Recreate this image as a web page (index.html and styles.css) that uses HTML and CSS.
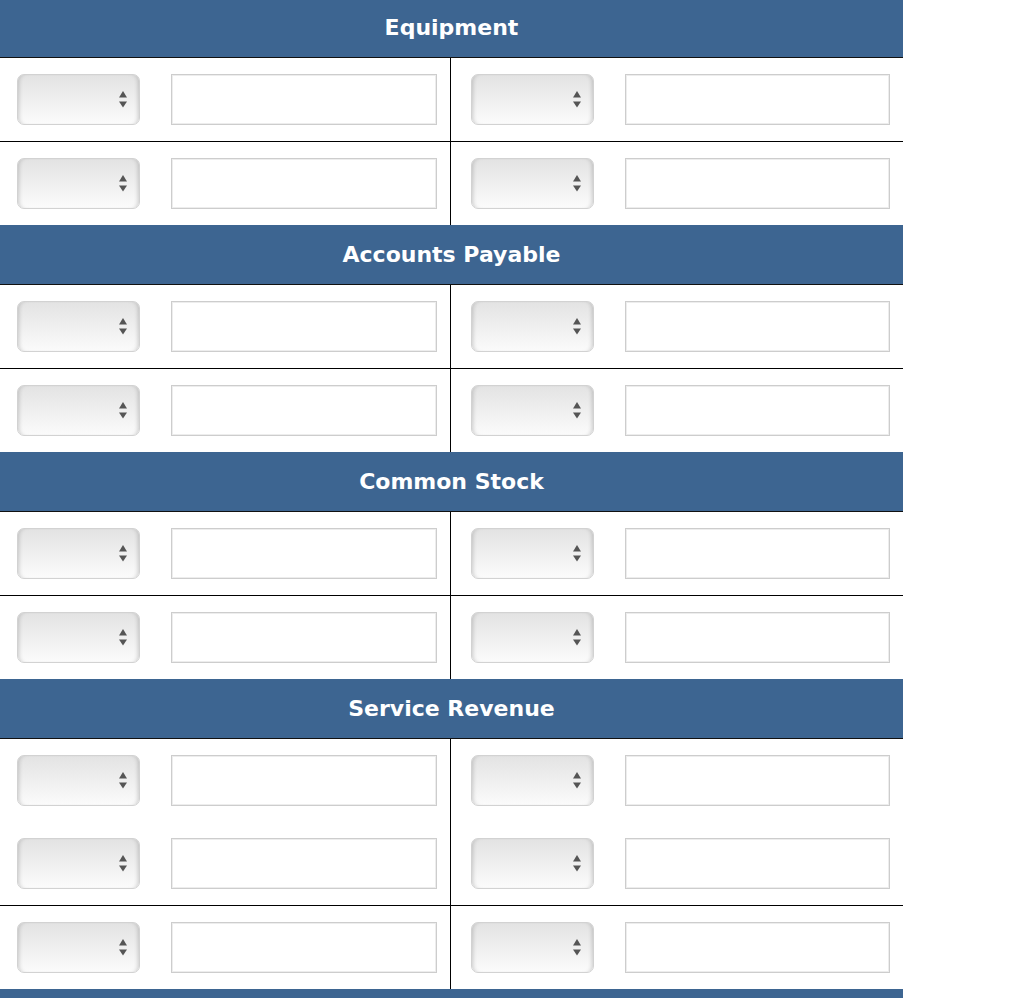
FILE: index.html
```html
<!DOCTYPE html>
<html lang="en">

<head>
    <meta charset="UTF-8">
    <meta name="viewport" content="width=device-width, initial-scale=1.0">
    <title>journal</title>
    <link rel="stylesheet" href="styles.css">
</head>

<body>

    <div class="sheet">

        <!-- Equipment -->
        <h2 class="account">Equipment</h2>
        <div class="row ruled">
            <div class="cell"><div class="pick"><svg viewBox="0 0 8 17" width="8" height="17"><polygon points="4,0 8,6.5 0,6.5"/><polygon points="0,10.5 8,10.5 4,16.5"/></svg></div><input class="amount" type="text"></div>
            <div class="cell right"><div class="pick"><svg viewBox="0 0 8 17" width="8" height="17"><polygon points="4,0 8,6.5 0,6.5"/><polygon points="0,10.5 8,10.5 4,16.5"/></svg></div><input class="amount" type="text"></div>
        </div>
        <div class="row">
            <div class="cell"><div class="pick"><svg viewBox="0 0 8 17" width="8" height="17"><polygon points="4,0 8,6.5 0,6.5"/><polygon points="0,10.5 8,10.5 4,16.5"/></svg></div><input class="amount" type="text"></div>
            <div class="cell right"><div class="pick"><svg viewBox="0 0 8 17" width="8" height="17"><polygon points="4,0 8,6.5 0,6.5"/><polygon points="0,10.5 8,10.5 4,16.5"/></svg></div><input class="amount" type="text"></div>
        </div>

        <!-- Accounts Payable -->
        <h2 class="account">Accounts Payable</h2>
        <div class="row ruled">
            <div class="cell"><div class="pick"><svg viewBox="0 0 8 17" width="8" height="17"><polygon points="4,0 8,6.5 0,6.5"/><polygon points="0,10.5 8,10.5 4,16.5"/></svg></div><input class="amount" type="text"></div>
            <div class="cell right"><div class="pick"><svg viewBox="0 0 8 17" width="8" height="17"><polygon points="4,0 8,6.5 0,6.5"/><polygon points="0,10.5 8,10.5 4,16.5"/></svg></div><input class="amount" type="text"></div>
        </div>
        <div class="row">
            <div class="cell"><div class="pick"><svg viewBox="0 0 8 17" width="8" height="17"><polygon points="4,0 8,6.5 0,6.5"/><polygon points="0,10.5 8,10.5 4,16.5"/></svg></div><input class="amount" type="text"></div>
            <div class="cell right"><div class="pick"><svg viewBox="0 0 8 17" width="8" height="17"><polygon points="4,0 8,6.5 0,6.5"/><polygon points="0,10.5 8,10.5 4,16.5"/></svg></div><input class="amount" type="text"></div>
        </div>

        <!-- Common Stock -->
        <h2 class="account">Common Stock</h2>
        <div class="row ruled">
            <div class="cell"><div class="pick"><svg viewBox="0 0 8 17" width="8" height="17"><polygon points="4,0 8,6.5 0,6.5"/><polygon points="0,10.5 8,10.5 4,16.5"/></svg></div><input class="amount" type="text"></div>
            <div class="cell right"><div class="pick"><svg viewBox="0 0 8 17" width="8" height="17"><polygon points="4,0 8,6.5 0,6.5"/><polygon points="0,10.5 8,10.5 4,16.5"/></svg></div><input class="amount" type="text"></div>
        </div>
        <div class="row">
            <div class="cell"><div class="pick"><svg viewBox="0 0 8 17" width="8" height="17"><polygon points="4,0 8,6.5 0,6.5"/><polygon points="0,10.5 8,10.5 4,16.5"/></svg></div><input class="amount" type="text"></div>
            <div class="cell right"><div class="pick"><svg viewBox="0 0 8 17" width="8" height="17"><polygon points="4,0 8,6.5 0,6.5"/><polygon points="0,10.5 8,10.5 4,16.5"/></svg></div><input class="amount" type="text"></div>
        </div>

        <!-- Service Revenue -->
        <h2 class="account">Service Revenue</h2>
        <div class="row">
            <div class="cell"><div class="pick"><svg viewBox="0 0 8 17" width="8" height="17"><polygon points="4,0 8,6.5 0,6.5"/><polygon points="0,10.5 8,10.5 4,16.5"/></svg></div><input class="amount" type="text"></div>
            <div class="cell right"><div class="pick"><svg viewBox="0 0 8 17" width="8" height="17"><polygon points="4,0 8,6.5 0,6.5"/><polygon points="0,10.5 8,10.5 4,16.5"/></svg></div><input class="amount" type="text"></div>
        </div>
        <div class="row ruled">
            <div class="cell"><div class="pick"><svg viewBox="0 0 8 17" width="8" height="17"><polygon points="4,0 8,6.5 0,6.5"/><polygon points="0,10.5 8,10.5 4,16.5"/></svg></div><input class="amount" type="text"></div>
            <div class="cell right"><div class="pick"><svg viewBox="0 0 8 17" width="8" height="17"><polygon points="4,0 8,6.5 0,6.5"/><polygon points="0,10.5 8,10.5 4,16.5"/></svg></div><input class="amount" type="text"></div>
        </div>
        <div class="row">
            <div class="cell"><div class="pick"><svg viewBox="0 0 8 17" width="8" height="17"><polygon points="4,0 8,6.5 0,6.5"/><polygon points="0,10.5 8,10.5 4,16.5"/></svg></div><input class="amount" type="text"></div>
            <div class="cell right"><div class="pick"><svg viewBox="0 0 8 17" width="8" height="17"><polygon points="4,0 8,6.5 0,6.5"/><polygon points="0,10.5 8,10.5 4,16.5"/></svg></div><input class="amount" type="text"></div>
        </div>

        <h2 class="account"></h2>

    </div>

</body>

</html>
```

FILE: styles.css
```css
body {
    margin: 0;
    background: #fff;
    font-family: "DejaVu Sans", Verdana, sans-serif;
}

.sheet {
    width: 903px;
    margin-top: -2px;
}

.account {
    margin: 0;
    height: 59px;
    line-height: 59px;
    background-color: #3d6591;
    border-bottom: 1px solid #111;
    color: #fff;
    font-size: 22px;
    font-weight: bold;
    text-align: center;
}

.row {
    display: grid;
    grid-template-columns: 450px 453px;
    height: 83px;
}

.row.ruled {
    height: 84px;
    border-bottom: 1px solid #000;
    box-sizing: border-box;
}

.cell {
    display: flex;
    align-items: center;
    gap: 31px;
    padding-left: 17px;
}

.cell.right {
    border-left: 1px solid #000;
    padding-left: 20px;
}

.pick {
    width: 123px;
    height: 51px;
    box-sizing: border-box;
    display: flex;
    align-items: center;
    justify-content: flex-end;
    padding-right: 12px;
    border: 1px solid #d2d2d2;
    border-radius: 7px;
    background: linear-gradient(#e3e3e3, #fbfbfb);
    box-shadow: inset 4px 0 4px -3px rgba(0, 0, 0, 0.18), inset -4px 0 4px -3px rgba(0, 0, 0, 0.18);
}

.pick svg {
    fill: #555;
}

.amount {
    width: 266px;
    height: 51px;
    box-sizing: border-box;
    margin: 0;
    border: 1px solid #cdcdcd;
    box-shadow: inset 0 0 0 1px #ededed;
    background: #fff;
    outline: none;
}

.right .amount {
    width: 265px;
}
```
